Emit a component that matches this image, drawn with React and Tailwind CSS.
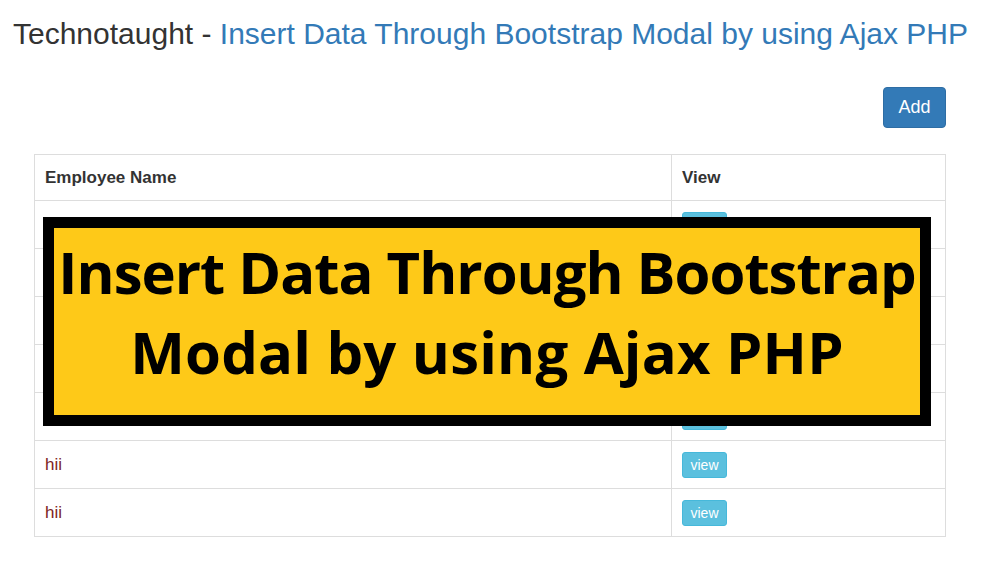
const rows = Array.from({ length: 7 }, () => 'hii')

const App = () => {
  return (
    <div className="relative w-[990px] h-[578px] bg-white font-['Liberation_Sans',Arial,sans-serif] text-[#333]">
      <h1 className="pl-[13px] pt-[17px] text-[30px] leading-[33px] font-normal whitespace-nowrap">
        Technotaught - <span className="text-[#337ab7]">Insert Data Through Bootstrap Modal by using Ajax PHP</span>
      </h1>

      <div className="flex justify-end pr-[44px] mt-[37px]">
        <button className="w-[63px] h-[41px] rounded-[4px] bg-[#337ab7] border border-[#2e6da4] text-white text-[18px]">
          Add
        </button>
      </div>

      <div className="ml-[34px] mt-[26px] w-[912px] border border-[#ddd] text-[17px]">
        <div className="flex h-[45px] items-center font-bold">
          <div className="w-[637px] h-full flex items-center pl-[10px] border-r border-[#ddd]">Employee Name</div>
          <div className="flex-1 pl-[10px]">View</div>
        </div>
        {rows.map((name, i) => (
          <div key={i} className="flex h-[48px] border-t border-[#ddd]">
            <div className="w-[637px] h-full flex items-center pl-[10px] border-r border-[#ddd] text-[#7d1d1d]">{name}</div>
            <div className="flex-1 flex items-center pl-[10px]">
              <button className="w-[45px] h-[26px] rounded-[3px] bg-[#5bc0de] border border-[#46b8da] text-white text-[14px] leading-none">
                view
              </button>
            </div>
          </div>
        ))}
      </div>

      <div className="absolute left-[43px] top-[217px] w-[888px] h-[209px] border-[11px] border-black bg-[#fec918]">
        <div className="pt-[4px] text-center font-['Open_Sans',sans-serif] font-bold text-[58px] leading-[80px] text-black">
          <div className="tracking-[-1px]">Insert Data Through Bootstrap</div>
          <div className="tracking-[0.2px]">Modal by using Ajax PHP</div>
        </div>
      </div>
    </div>
  )
}

export default App
